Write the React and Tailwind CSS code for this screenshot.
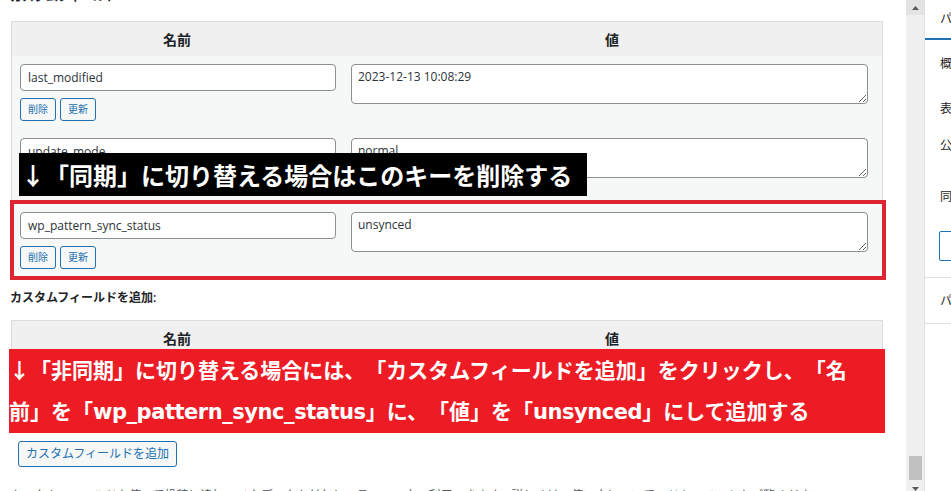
import React from "react";

const SmallButton = ({ children }) => (
  <button
    type="button"
    className="h-[23px] rounded-[3px] border border-[#2271b1] bg-[#f6f7f7] px-[7px] text-[10px] leading-[21px] text-[#2271b1]"
  >
    {children}
  </button>
);

const MetaRow = ({ name, value }) => (
  <div className="flex h-[74px]">
    <div className="w-[330px] shrink-0 pl-[8px] pt-[8px]">
      <input
        type="text"
        readOnly
        value={name}
        className="block h-[27px] w-[316px] rounded-[4px] border border-[#8c8f94] bg-white px-[7px] text-[12px] text-[#2c3338] outline-none"
      />
      <div className="mt-[7px] flex gap-[4px]">
        <SmallButton>削除</SmallButton>
        <SmallButton>更新</SmallButton>
      </div>
    </div>
    <div className="flex-1 pl-[9px] pr-[14px] pt-[8px]">
      <textarea
        readOnly
        value={value}
        className="block h-[40px] w-full rounded-[4px] border border-[#8c8f94] bg-white px-[6px] py-[2px] text-[12px] leading-[20px] text-[#2c3338] outline-none"
      />
    </div>
  </div>
);

const TableHead = () => (
  <div className="flex h-[34px] items-center bg-[#f0f0f1] text-[14px] font-bold text-[#1d2327]">
    <div className="w-[330px] shrink-0 text-center">名前</div>
    <div className="flex-1 text-center">値</div>
  </div>
);

const Arrow = () => (
  <span className="font-['Noto_Sans_CJK_JP',sans-serif]">↓</span>
);

const Latin = ({ children }) => <span className="tracking-[-0.45px]">{children}</span>;

const Scrollbar = () => (
  <div className="flex h-[491px] w-[18px] shrink-0 flex-col bg-[#f0f0f0]">
    <div className="flex h-[15px] w-full items-center justify-center bg-[#e3e3e3]">
      <svg width="7" height="4" viewBox="0 0 7 4">
        <path d="M0 4 L3.5 0 L7 4 Z" fill="#5a5a5a" />
      </svg>
    </div>
    <div className="flex-1" />
    <div className="ml-[3px] h-[24px] w-[13px] bg-[#c1c1c1]" />
    <div className="flex h-[11px] justify-center pt-[7px]">
      <svg width="7" height="4" viewBox="0 0 7 4">
        <path d="M0 0 L7 0 L3.5 4 Z" fill="#5a5a5a" />
      </svg>
    </div>
  </div>
);

const Sidebar = () => (
  <aside className="flex-1 overflow-hidden whitespace-nowrap border-l border-[#e0e0e0] bg-white font-['Noto_Sans_CJK_JP',sans-serif] text-[12px] leading-[20px] text-[#1e1e1e]">
    <div className="h-[40px] border-b-2 border-[#2271b1] pl-[15px] pt-[8px]">パターン</div>
    <div className="border-b border-[#e0e0e0] pb-[16px] pl-[15px]">
      <div className="mt-[13px]">概要</div>
      <div className="mt-[25px]">表示</div>
      <div className="mt-[17px]">公開</div>
      <div className="mt-[31px]">同期</div>
      <div className="-ml-px mt-[25px] h-[30px] w-[120px] rounded-[2px] border border-[#2271b1]" />
    </div>
    <div className="border-b border-[#e0e0e0] pb-[13px] pl-[15px] pt-[12px]">パターンカテゴリー</div>
  </aside>
);

export default function App() {
  return (
    <div className="flex h-[491px] w-[951px] overflow-hidden bg-white font-['Open_Sans','Noto_Sans_CJK_JP',sans-serif] [text-spacing-trim:space-all]">
      <div className="w-[906px] shrink-0 overflow-hidden pl-[11px] pr-[23px]">
        <div className="-ml-px -mt-[11px] h-[16px] text-[12px] font-semibold leading-[16px] text-[#1d2327]">
          カスタムフィールド
        </div>

        <div className="relative mt-[16px] border border-[#dcdcde] bg-[#f6f7f7]">
          <TableHead />
          <MetaRow name="last_modified" value="2023-12-13 10:08:29" />
          <MetaRow name="update_mode" value="normal" />
          <MetaRow name="wp_pattern_sync_status" value="unsynced" />

          <div className="absolute left-[7px] top-[131px] h-[43px] w-[568px] overflow-hidden whitespace-nowrap bg-black pl-[2px] font-['DejaVu_Sans','Noto_Sans_CJK_JP',sans-serif] text-[24px] font-bold leading-[43px] text-white">
            <Arrow />「同期」に切り替える場合はこのキーを削除する
          </div>
          <div className="absolute -left-[2px] top-[178px] h-[80px] w-[876px] border-4 border-[#dc2530]" />
        </div>

        <div className="-ml-px mt-[11px] h-[16px] text-[12px] font-semibold leading-[16px] text-[#1d2327]">
          カスタムフィールドを追加:
        </div>

        <div className="relative mt-[14px] h-[113px] border border-[#dcdcde] bg-[#f6f7f7]">
          <TableHead />
          <div className="absolute -left-[3px] top-[28px] h-[84px] w-[876px] whitespace-nowrap bg-[#ed1c24] font-['DejaVu_Sans','Noto_Sans_CJK_JP',sans-serif] text-[21px] font-bold leading-[41px] text-white">
            <Arrow />「非同期」に切り替える場合には、「カスタムフィールドを追加」をクリックし、「名
            <br />
            前」を「<Latin>wp_pattern_sync_status</Latin>」に、「値」を「<Latin>unsynced</Latin>」にして追加する
          </div>
        </div>

        <button
          type="button"
          className="ml-[7px] mt-[8px] h-[26px] rounded-[3px] border border-[#2271b1] bg-[#f6f7f7] px-[7px] text-[12px] leading-[24px] text-[#2271b1]"
        >
          カスタムフィールドを追加
        </button>

        <p className="-ml-px mt-[20px] whitespace-nowrap text-[12px] leading-[18px] text-[#50575e]">
          カスタムフィールドを使って投稿に追加のメタデータを付与し、テーマの中で利用できます。詳しくは、使い方についての
          <a className="text-[#2271b1] underline">ドキュメント</a>
          をご覧ください。
        </p>
      </div>
      <Scrollbar />
      <Sidebar />
    </div>
  );
}
